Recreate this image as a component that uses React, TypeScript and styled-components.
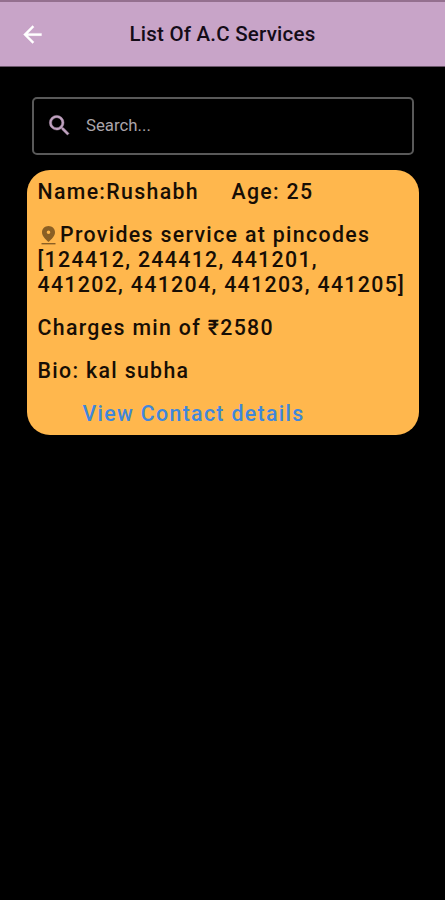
import React from "react";
import styled, { createGlobalStyle } from "styled-components";
import { MdArrowBack, MdSearch } from "react-icons/md";

const GlobalStyle = createGlobalStyle`
  * { box-sizing: border-box; }
  body { margin: 0; background: #000; font-family: Roboto, "Noto Sans", sans-serif; }
`;

const Screen = styled.div`
  min-height: 900px;
  background: #000;
`;

const AppBar = styled.header`
  display: grid;
  grid-template-columns: 64px 1fr 64px;
  align-items: center;
  height: 67px;
  border-top: 2px solid #94708f;
  border-bottom: 1px solid #6b566a;
  background: #c8a4c8;
`;

const BackButton = styled.button`
  display: flex;
  justify-content: center;
  padding: 0;
  border: 0;
  background: none;
  color: #fff;
  font-size: 27px;
`;

const BackIcon = styled(MdArrowBack)`
  path:first-child { stroke: none; }
  path:last-child { stroke: #fff; stroke-width: 0.3px; }
`;

const Title = styled.h1`
  margin: 0;
  text-align: center;
  white-space: nowrap;
  font-size: 20.5px;
  font-weight: 500;
  line-height: 24px;
  letter-spacing: 0.22px;
  color: #140c18;
`;

const Content = styled.main`
  padding: 30px 26px 0 27px;
`;

const SearchField = styled.label`
  display: flex;
  align-items: center;
  gap: 13px;
  height: 58px;
  margin: 0 5px;
  padding: 0 0 1px 12px;
  border: 2px solid #595959;
  border-radius: 5px;
  color: #c0a2c0;
  font-size: 27px;
`;

const SearchIcon = styled(MdSearch)`
  path:first-child { stroke: none; }
  path:last-child { stroke: #c0a2c0; stroke-width: 0.4px; }
`;

const SearchInput = styled.input`
  flex: 1;
  min-width: 0;
  padding: 0 0 2px;
  border: 0;
  outline: 0;
  background: none;
  color: #fff;
  font: 400 16.8px/24px Roboto, sans-serif;
  letter-spacing: 0;
  &::placeholder { color: #aaa5aa; opacity: 1; }
`;

const Card = styled.article`
  display: flex;
  flex-direction: column;
  gap: 18px;
  height: 265px;
  margin-top: 15px;
  padding: 9px 0 0 10.5px;
  border-radius: 23px;
  background: #ffb74d;
  color: #170e05;
  font-size: 21.3px;
  font-weight: 500;
  line-height: 25px;
  letter-spacing: 1.33px;
  white-space: nowrap;
`;

const NameRow = styled.div`
  display: flex;
  gap: 32.5px;
`;

const Line = styled.div``;

const PinIcon = styled.svg`
  width: 15px;
  height: 19px;
  margin: 0 4px 0 3.5px;
  vertical-align: -3px;
  fill: #8a5f24;
`;

const ContactLink = styled.a`
  align-self: flex-start;
  margin-left: 45px;
  color: #3f87dc;
`;

export default function App() {
  return (
    <Screen>
      <GlobalStyle />
      <AppBar>
        <BackButton aria-label="Back"><BackIcon /></BackButton>
        <Title>List Of A.C Services</Title>
      </AppBar>
      <Content>
        <SearchField>
          <SearchIcon />
          <SearchInput placeholder="Search..." />
        </SearchField>
        <Card>
          <NameRow>
            <span>Name:Rushabh</span>
            <span>Age: 25</span>
          </NameRow>
          <div>
            <Line>
              <PinIcon viewBox="0 0 15 19" aria-hidden="true">
                <path
                  fillRule="evenodd"
                  d="M7.5 0C3.8 0 1 2.8 1 6.3C1 10.2 4.4 13.2 7.5 16C10.6 13.2 14 10.2 14 6.3C14 2.8 11.2 0 7.5 0ZM7.5 4.4A1.8 1.8 0 1 1 7.5 8A1.8 1.8 0 1 1 7.5 4.4Z"
                />
                <path d="M.5 17H14.5V18.4H.5Z" />
              </PinIcon>
              Provides service at pincodes
            </Line>
            <Line>[124412, 244412, 441201,</Line>
            <Line>441202, 441204, 441203, 441205]</Line>
          </div>
          <Line>Charges min of ₹2580</Line>
          <Line>Bio: kal subha</Line>
          <ContactLink>View Contact details</ContactLink>
        </Card>
      </Content>
    </Screen>
  );
}
